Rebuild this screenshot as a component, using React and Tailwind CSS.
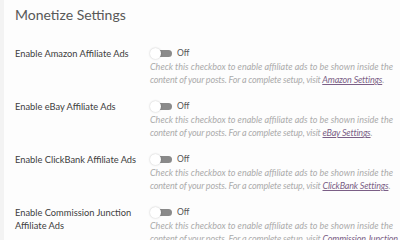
import React from "react";

const rows = [
  { label: ["Enable Amazon Affiliate Ads"], link: "Amazon Settings" },
  { label: ["Enable eBay Affiliate Ads"], link: "eBay Settings" },
  { label: ["Enable ClickBank Affiliate Ads"], link: "ClickBank Settings" },
  { label: ["Enable Commission Junction", "Affiliate Ads"], link: "Commission Junction Settings" },
];

function Toggle() {
  return (
    <div className="relative w-[22px] h-[9px] mr-[5px] shrink-0">
      <div className="absolute left-[6px] top-[1px] w-[16px] h-[7px] rounded-full bg-[#8a8a8a]" />
      <div className="absolute left-0 top-[-1px] w-[11px] h-[11px] rounded-full bg-white shadow-[0_0_2px_rgba(0,0,0,0.25)]" />
    </div>
  );
}

export default function App() {
  return (
    <div
      className="w-[400px] h-[240px] overflow-hidden bg-[#fdfdfd] border-l-[4px] border-[#f3f3f3]"
      style={{ fontFamily: 'Lato, "Open Sans", sans-serif' }}
    >
      <div className="pl-[11px] pt-[5px] text-[14px] leading-[20px] text-[#585858]">
        Monetize Settings
      </div>
      <div className="mt-[22px] flex flex-col gap-[14px]">
        {rows.map((r, i) => (
          <div key={i} className="flex">
            <div className="w-[146px] shrink-0 pl-[11px] text-[9.3px] leading-[13px] text-[#404040] whitespace-nowrap">
              {r.label.map((l, j) => (
                <div key={j}>{l}</div>
              ))}
            </div>
            <div className="min-w-0 flex-1">
              <div className="flex items-center h-[13px]">
                <Toggle />
                <span className="text-[8.5px] text-[#555]">Off</span>
              </div>
              <div className="text-[9px] leading-[13px] italic text-[#ababab] whitespace-nowrap">
                <div>Check this checkbox to enable affiliate ads to be shown inside the</div>
                <div className="tracking-[-0.18px]">
                  content of your posts. For a complete setup, visit{" "}
                  <span className="underline text-[#7b5f86]">{r.link}</span>.
                </div>
              </div>
            </div>
          </div>
        ))}
      </div>
    </div>
  );
}
